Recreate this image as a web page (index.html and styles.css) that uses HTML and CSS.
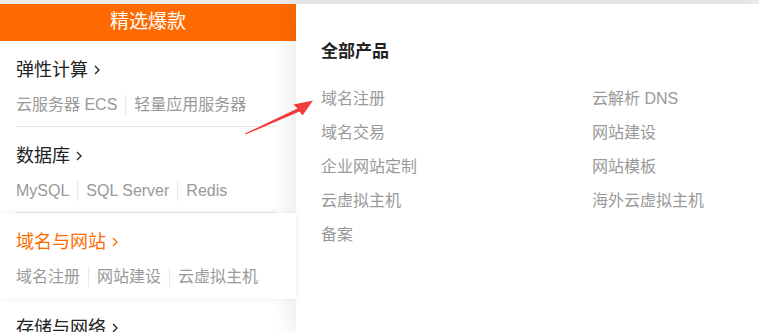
FILE: index.html
```html
<!DOCTYPE html>
<html lang="zh-CN">
<head>
  <meta charset="UTF-8">
  <meta name="viewport" content="width=device-width, initial-scale=1.0">
  <title>产品菜单</title>
  <link rel="stylesheet" href="styles.css">
</head>
<body>
  <div class="page">
    <div class="side">
      <div class="side-head">精选爆款</div>

      <div class="cat">
        <div class="cat-inner">
          <div class="cat-title">弹性计算 <svg class="chev" viewBox="0 0 6 10"><path d="M1 1l4 4-4 4"/></svg></div>
          <div class="cat-links"><span>云服务器 ECS</span><span>轻量应用服务器</span></div>
        </div>
      </div>

      <div class="cat">
        <div class="cat-inner">
          <div class="cat-title">数据库 <svg class="chev" viewBox="0 0 6 10"><path d="M1 1l4 4-4 4"/></svg></div>
          <div class="cat-links"><span>MySQL</span><span>SQL Server</span><span>Redis</span></div>
        </div>
      </div>

      <div class="cat active">
        <div class="cat-inner">
          <div class="cat-title">域名与网站 <svg class="chev" viewBox="0 0 6 10"><path d="M1 1l4 4-4 4"/></svg></div>
          <div class="cat-links"><span>域名注册</span><span>网站建设</span><span>云虚拟主机</span></div>
        </div>
      </div>

      <div class="cat">
        <div class="cat-inner">
          <div class="cat-title">存储与网络 <svg class="chev" viewBox="0 0 6 10"><path d="M1 1l4 4-4 4"/></svg></div>
          <div class="cat-links"><span>对象存储 OSS</span><span>CDN</span></div>
        </div>
      </div>
    </div>

    <div class="main">
      <h2 class="main-title">全部产品</h2>
      <ul class="prod-list">
        <li>域名注册</li>
        <li>云解析 DNS</li>
        <li>域名交易</li>
        <li>网站建设</li>
        <li>企业网站定制</li>
        <li>网站模板</li>
        <li>云虚拟主机</li>
        <li>海外云虚拟主机</li>
        <li>备案</li>
      </ul>
    </div>
  </div>

  <!-- 标注箭头 -->
  <svg class="mark" viewBox="0 0 759 332" width="759" height="332">
    <polygon points="245,133.5 297.5,108.5 293.5,104.5 313,100.5 302.5,115.5 299.5,111.5 245.5,134.5"/>
  </svg>
</body>
</html>
```

FILE: styles.css
```css
/* 页面整体 */
body {
  margin: 0;
  height: 100vh;
  overflow: hidden;
  background: #ebebeb;
  font-family: "Liberation Sans", "Noto Sans CJK SC", sans-serif;
  color: #222;
}
.page {
  display: flex;
  padding-top: 4px;
  height: 100%;
  box-sizing: border-box;
}

/* 左侧分类 */
.side {
  width: 296px;
  flex: none;
  background: #fff;
}
.side-head {
  height: 37px;
  line-height: 36px;
  background: #ff6a00;
  color: #fff;
  text-align: center;
  font-size: 19px;
}
.cat {
  padding: 0 20px 0 16px;
  background: #fff;
}
.cat-inner {
  height: 86px;
  box-sizing: border-box;
  padding-top: 18px;
  border-bottom: 1px solid #e6e6e6;
}
.cat-title {
  display: flex;
  align-items: center;
  gap: 6px;
  font-size: 18px;
  line-height: 22px;
  color: #222;
}
.chev {
  width: 6px;
  height: 10px;
  fill: none;
  stroke: currentColor;
  stroke-width: 1.3;
}
.cat-links {
  margin-top: 14px;
  display: flex;
  font-size: 16px;
  line-height: 20px;
  color: #999;
}
.cat-links span + span {
  margin-left: 8px;
  padding-left: 8px;
  border-left: 1px solid #e8e8e8;
}
.cat.active {
  position: relative;
  z-index: 2;
  box-shadow: 0 0 6px rgba(0, 0, 0, 0.08);
}
.cat.active .cat-inner {
  border-bottom-color: transparent;
}
.cat.active .cat-title {
  color: #ff6a00;
}

/* 右侧产品 */
.main {
  flex: 1;
  background: #fff;
  padding: 36px 0 0 25px;
  box-shadow: -8px 0 18px rgba(0, 0, 0, 0.07);
}
.main-title {
  margin: 0 0 16px;
  font-size: 17px;
  line-height: 24px;
  font-weight: bold;
  color: #222;
}
.prod-list {
  list-style: none;
  margin: 0;
  padding: 0;
  display: grid;
  grid-template-columns: 271px 1fr;
  grid-auto-rows: 34px;
  align-items: center;
  font-size: 16px;
  color: #999;
}

/* 红色标注 */
.mark {
  position: absolute;
  left: 0;
  top: 0;
  pointer-events: none;
  z-index: 5;
}
.mark polygon {
  fill: #f23b3b;
}
```
